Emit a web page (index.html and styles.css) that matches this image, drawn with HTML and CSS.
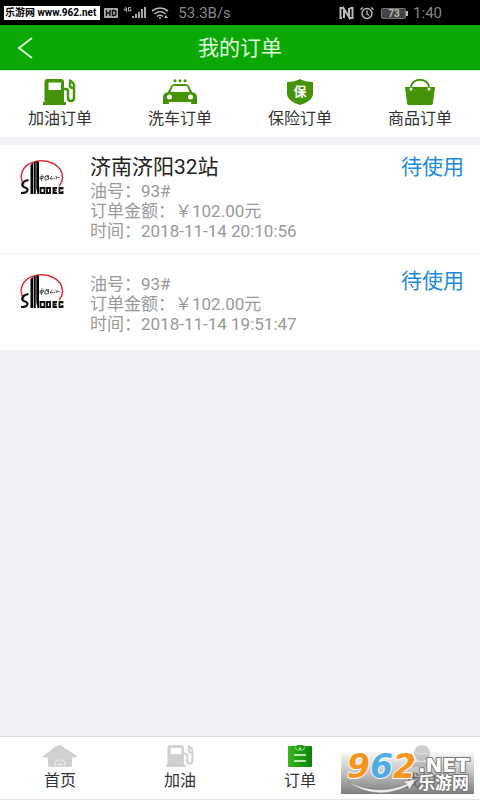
FILE: index.html
```html
<!DOCTYPE html>
<html lang="zh-CN">
<head>
<meta charset="utf-8">
<meta name="viewport" content="width=device-width, initial-scale=1">
<title>我的订单</title>
<link rel="stylesheet" href="styles.css">
</head>
<body>
<svg width="0" height="0" class="defs" aria-hidden="true">
  <symbol id="pump" viewBox="0 0 34 26">
    <path fill="currentColor" fill-rule="evenodd" d="M4 0H18Q21 0 21 3V23H23V26H0V23H1.500V3Q1.500 0 4 0ZM5.500 3.500V11H18V3.500Z"/>
    <path fill="none" stroke="currentColor" stroke-width="2.400" d="M21 10H23Q25 10 25 13V19Q25 22 28 22T31 19V6Q31 4 26 1M27 3V7Q27 9 31 9"/>
  </symbol>
  <symbol id="sinopec" viewBox="0 0 44 36">
    <path fill="none" stroke="#d9303c" stroke-width="1.500" d="M4 25C-2 17 2 5 14 2C28-2 42 5 42.500 17Q42.500 22 39 26"/>
    <path d="M10.500 5L13 3V34H10.500ZM13.700 2.500L15.700 2V34H13.700ZM16.300 1L19 2V34H17.500L16.300 28Z"/>
    <path fill="none" stroke="#111" stroke-width="2.200" d="M8.500 20C3 21 0 25 4 27C10 29 8 33 1 33"/>
    <path fill="none" stroke="#111" stroke-width="1.900" d="M20.500 28H24.500V33H20.500ZM27 28H30V33H27ZM37 28H33.500V33H37M33.500 30.500H36.500M42.500 29.500V28H39.500V33H42.500V31"/>
    <path fill="none" stroke="#444" stroke-width=".9" d="M20 17L23.500 16.500L23 18.500L20 19ZM22 14.500L21.500 21M25 16.500L28.500 15.500V19.500L25 20ZM26.500 15L28 18M30 19L32 16M30 19L33.500 18.500M34 18L35 19M36 16L36.500 19M37 17L40 18"/>
  </symbol>
</svg>

<div class="app">
  <div class="status">
    <span class="site">乐游网 www.962.net</span>
    <svg class="signal" viewBox="0 0 65 14" width="65" height="14" aria-hidden="true">
      <rect x="0" y="2" width="14" height="10" rx="1" fill="#aaa"/>
      <path fill="none" stroke="#111" stroke-width="1.400" d="M2.500 4V10M6 4V10M2.500 7H6M8.500 4.500V9.500H10Q12 9.500 12 7T10 4.500Z"/>
      <path fill="none" stroke="#aaa" d="M22 1L20 4H23M22.500 2V6M27 1.500H24.500V5H27V3.500H26"/>
      <path fill="#aaa" d="M28 10H30V12H28ZM31 8H33V12H31ZM34 6H36V12H34ZM37 3H39V12H37ZM40 1H42V12H40Z"/>
      <path fill="none" stroke="#bbb" stroke-width="1.600" d="M48 5Q56-1 64 5M50.500 8Q56 3 61.500 8M53 10.500Q56 8 59 10.500"/>
      <circle cx="56" cy="12" r="1" fill="#bbb"/><path fill="#bbb" d="M60 12L62 9L64 12Z"/>
    </svg>
    <span class="speed">53.3B/s</span>
    <svg class="devices" viewBox="0 0 70 14" width="70" height="14" role="img" aria-label="73%">
      <path fill="none" stroke="#bbb" stroke-width="2" d="M4 2H1.500V12H3M11 2H13.500V12H11M5 12V3L10 11V2"/>
      <circle cx="28" cy="7.500" r="5" fill="none" stroke="#bbb" stroke-width="1.400"/>
      <path fill="none" stroke="#bbb" stroke-width="1.400" d="M28 4.500V8L30 9.500M21.500 3.500L24 1.500M34.500 3.500L32 1.500"/>
      <rect x="42.500" y="2.500" width="24" height="10" rx="1" fill="#444" stroke="#777"/>
      <rect x="67" y="5" width="2" height="5" fill="#bbb"/>
      <text x="55" y="11" text-anchor="middle" class="battery">73</text>
    </svg>
    <span class="clock">1:40</span>
  </div>

  <header class="header">
    <button class="back" type="button" aria-label="返回"><svg viewBox="0 0 16 22" width="16" height="22"><path d="M15 1L2 11L15 21" fill="none" stroke="#d8ffd8" stroke-width="2"/></svg></button>
    <h1>我的订单</h1>
  </header>

  <nav class="kinds">
    <a href="#fuel"><svg viewBox="0 0 34 26" width="34" height="26"><use href="#pump"/></svg>加油订单</a>
    <a href="#wash"><svg viewBox="0 0 34 26" width="34" height="26"><path fill="currentColor" fill-rule="evenodd" d="M8 7Q9 5 12 5H22Q25 5 26 7L29 13Q34 14 34 18V25H28V23H6V25H0V18Q0 14 5 13ZM10 7L7.500 13H26.500L24 7ZM6.500 15.500A2.500 2.500 0 1 0 6.500 20.500A2.500 2.500 0 1 0 6.500 15.500ZM27.500 15.500A2.500 2.500 0 1 0 27.500 20.500A2.500 2.500 0 1 0 27.500 15.500Z"/><g fill="currentColor"><circle cx="12" cy="1.700" r="1.500"/><circle cx="17" cy="1.700" r="1.500"/><circle cx="22" cy="1.700" r="1.500"/></g></svg>洗车订单</a>
    <a href="#insurance"><svg viewBox="0 0 34 26" width="34" height="26"><path fill="currentColor" d="M17 0Q22 3 30 3V15Q30 22 17 26Q4 22 4 15V3Q12 3 17 0Z"/><text x="17" y="17" text-anchor="middle" class="shield">保</text></svg>保险订单</a>
    <a href="#goods"><svg viewBox="0 0 34 26" width="34" height="26"><path fill="currentColor" d="M2 8H32L30 24Q29.800 26 28 26H6Q4.200 26 4 24Z"/><path fill="none" stroke="currentColor" stroke-width="1.800" d="M8 9C8-2 26-2 26 9"/><circle cx="8" cy="10" r="1.500" fill="#fff"/><circle cx="26" cy="10" r="1.500" fill="#fff"/></svg>商品订单</a>
  </nav>

  <main class="orders">
    <article class="order">
      <svg class="brand" viewBox="0 0 44 36" width="44" height="36" role="img" aria-label="SINOPEC"><use href="#sinopec"/></svg>
      <div class="info">
        <h2>济南济阳32站</h2>
        <p>油号：93#</p>
        <p>订单金额：￥102.00元</p>
        <p>时间：2018-11-14 20:10:56</p>
      </div>
      <span class="state">待使用</span>
    </article>
    <article class="order untitled">
      <svg class="brand" viewBox="0 0 44 36" width="44" height="36" role="img" aria-label="SINOPEC"><use href="#sinopec"/></svg>
      <div class="info">
        <p>油号：93#</p>
        <p>订单金额：￥102.00元</p>
        <p>时间：2018-11-14 19:51:47</p>
      </div>
      <span class="state">待使用</span>
    </article>
  </main>

  <footer class="footer">
    <nav class="tabs">
      <a href="#home"><svg viewBox="0 0 34 22" width="34" height="22"><path fill="currentColor" d="M17 0L34 11Q34 12.500 32 12.500H29V20Q29 22 27 22H7Q5 22 5 20V12.500H2Q0 12.500 0 11L12 2Q14 0 17 0Z"/><path fill="none" stroke="#eee" stroke-width="1.200" d="M12 22V19Q12 15 17 15T22 19V22M15 20Q17 18 19 20"/></svg>首页</a>
      <a href="#refuel"><svg viewBox="0 0 34 26" width="29" height="22"><use href="#pump"/></svg>加油</a>
      <a href="#orders" aria-current="page"><svg viewBox="0 0 26 22" width="26" height="22"><defs><linearGradient id="leaf" x1="0" x2="1"><stop offset="0" stop-color="#38b51d"/><stop offset="1" stop-color="#078406"/></linearGradient></defs><path fill="url(#leaf)" d="M2 1H8L11 0H15L18 1H24Q25 1 25 2V21Q25 22 24 22H2Q1 22 1 21V2Q1 1 2 1Z"/><path stroke="#efffe8" stroke-width="1.600" d="M7 10H19M7 16H19"/><path fill="none" stroke="#a8e59a" stroke-width=".8" d="M8 2Q9 5 11 5H15Q17 5 18 2"/><circle cx="13" cy="3.500" r="1" fill="#efffe8"/></svg>订单</a>
      <a href="#me"><svg viewBox="0 0 34 22" width="34" height="22"><circle cx="19" cy="8" r="8" fill="currentColor"/><path stroke="#eee" d="M13 8Q19 10 25 8" fill="none"/><path fill="currentColor" d="M7 22Q8 17 19 17T31 22Z"/></svg>我的</a>
    </nav>
    <svg class="watermark" viewBox="0 0 133 42" width="133" height="42" role="img" aria-label="962.NET 乐游网">
      <defs>
        <linearGradient id="shade" x1="0" x2="0" y1="0" y2="1"><stop offset="0" stop-color="#888" stop-opacity=".05"/><stop offset="1" stop-color="#777" stop-opacity=".95"/></linearGradient>
      </defs>
      <rect width="133" height="42" fill="url(#shade)"/>
      <path d="M6 29Q36 45 66 32L61 30L75 27L68 38L67 34Q34 50 6 29Z" fill="#eee" stroke="#777" stroke-width=".5"/>
      <text x="6" y="26" class="digits"><tspan fill="#f7941d">9</tspan><tspan fill="#4fabe0">6</tspan><tspan fill="#f7941d">2</tspan></text>
      <text x="77" y="20" class="net">.NET</text>
      <text x="77" y="37" class="name">乐游网</text>
    </svg>
  </footer>
</div>
</body>
</html>
```
FILE: styles.css
```css
* {
  box-sizing: border-box;
}

body {
  margin: 0;
  font-family: Roboto, "Noto Sans CJK SC", sans-serif;
  color: #333;
  background: #f0f1f6;
}

h1, h2, p {
  margin: 0;
  font-weight: 400;
}

a {
  color: inherit;
  text-decoration: none;
}

svg {
  display: block;
  flex: none;
}

.defs {
  position: absolute;
}

.app {
  display: flex;
  flex-direction: column;
  min-height: 100vh;
}

.status {
  display: flex;
  align-items: center;
  height: 25px;
  padding: 0 38px 0 4px;
  background: #000;
  color: #888;
  font-size: 15px;
  line-height: 16px;
}

.site {
  padding: 0 4px 0 1px;
  background: #fff;
  color: #000;
  font: 700 10px/14px Roboto, "Noto Sans CJK SC", sans-serif;
  white-space: nowrap;
}

.signal {
  margin-left: 4px;
}

.speed {
  margin-left: 9px;
}

.devices {
  margin-left: auto;
}

.clock {
  margin-left: 4px;
}

.battery {
  font-size: 10px;
  font-weight: 700;
  fill: #bbb;
}

.header {
  display: grid;
  grid-template-columns: 48px 1fr 48px;
  align-items: center;
  height: 46px;
  background: #0aa803;
  border-bottom: 1px solid #cfd;
}

.back {
  padding: 0 0 0 17px;
  border: 0;
  background: none;
}

.header h1 {
  color: #e4ffe2;
  font-size: 21px;
  line-height: 28px;
  text-align: center;
}

.kinds,
.tabs {
  display: grid;
  grid-template-columns: repeat(4, 1fr);
  background: #fff;
  font-size: 16px;
  line-height: 20px;
}

.kinds a,
.tabs a {
  display: flex;
  flex-direction: column;
  align-items: center;
}

.kinds {
  height: 66px;
  padding-top: 8px;
}

.kinds a {
  gap: 4px;
}

.kinds svg {
  color: #459408;
}

.shield {
  fill: #fff;
  font-size: 13px;
  font-weight: 700;
}

.orders {
  flex: 1;
  margin-top: 8px;
}

.order {
  display: flex;
  align-items: flex-start;
  padding: 8px 16px 12px 20px;
  background: #fff;
  border-bottom: 1px solid #f4f4f6;
}

.brand {
  margin-top: 7px;
}

.info {
  flex: 1;
  margin-left: 26px;
  color: #999;
  font-size: 17px;
  line-height: 20px;
}

.info h2 {
  color: #222;
  font-size: 21px;
  line-height: 28px;
}

.state {
  color: #1c8ae0;
  font-size: 21px;
  line-height: 28px;
}

.untitled {
  padding-top: 13px;
  padding-bottom: 16px;
}

.untitled .info {
  padding-top: 7px;
}

.footer {
  position: relative;
  background: #fff;
  border-top: 1px solid #d9dae2;
  border-bottom: 1px solid #e3e3e8;
}

.tabs {
  height: 62px;
  padding-top: 8px;
}

.tabs a {
  gap: 4px;
}

.tabs svg {
  color: #d0d0d0;
}

.watermark {
  position: absolute;
  right: 6px;
  bottom: 5px;
  overflow: visible;
}

.digits {
  font: italic 700 33px "DejaVu Sans", sans-serif;
  stroke: #fff;
  stroke-width: 2px;
  stroke-linejoin: round;
  paint-order: stroke;
}

.net,
.name {
  fill: #fff;
  stroke: #777;
  stroke-width: 2px;
  paint-order: stroke;
}

.net {
  font: 700 20px "DejaVu Sans", sans-serif;
}

.name {
  font: 700 17px "Noto Sans CJK SC", sans-serif;
}
```
